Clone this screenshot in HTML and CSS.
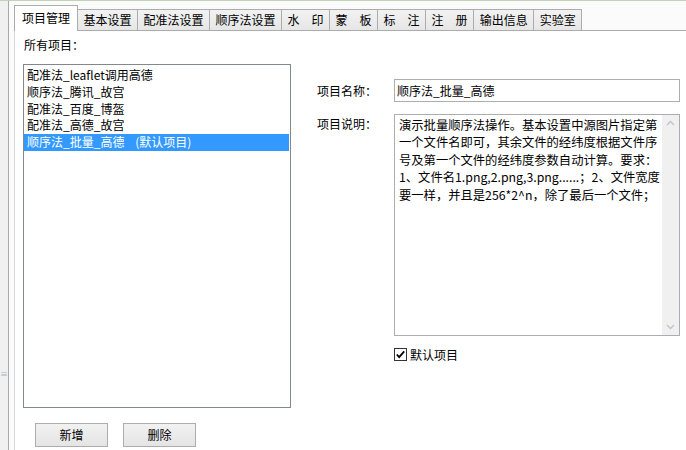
FILE: index.html
```html
<!DOCTYPE html>
<html lang="zh">
<head>
<meta charset="utf-8">
<link rel="stylesheet" href="styles.css">
</head>
<body>
<div class="topline"></div>
<div class="app">
  <div class="side"><span class="sidemark">≡</span></div>
  <div class="main">
    <div class="tabs">
      <div class="tab active">项目管理</div>
      <div class="tab after">基本设置</div>
      <div class="tab">配准法设置</div>
      <div class="tab">顺序法设置</div>
      <div class="tab">水　印</div>
      <div class="tab">蒙　板</div>
      <div class="tab">标　注</div>
      <div class="tab">注　册</div>
      <div class="tab">输出信息</div>
      <div class="tab last">实验室</div>
    </div>
    <div class="panel">
      <div class="leftcol">
        <div class="caption">所有项目：</div>
        <div class="listbox">
          <div class="item">配准法_leaflet调用高德</div>
          <div class="item">顺序法_腾讯_故宫</div>
          <div class="item">配准法_百度_博盔</div>
          <div class="item">配准法_高德_故宫</div>
          <div class="item sel">顺序法_批量_高德    (默认项目)</div>
        </div>
        <div class="buttons">
          <div class="btn">新增</div>
          <div class="btn">删除</div>
        </div>
      </div>
      <div class="rightcol">
        <div class="row">
          <div class="lbl">项目名称：</div>
          <div class="input">顺序法_批量_高德</div>
        </div>
        <div class="row desc">
          <div class="lbl">项目说明：</div>
          <div class="memo">
            <div class="memotext">演示批量顺序法操作。基本设置中源图片指定第<br>一个文件名即可，其余文件的经纬度根据文件序<br>号及第一个文件的经纬度参数自动计算。要求：<br>1、文件名1.png,2.png,3.png......；2、文件宽度<br>要一样，并且是256*2^n，除了最后一个文件；</div>
            <div class="vscroll">
              <svg class="arrow" width="17" height="17" viewBox="0 0 17 17"><path d="M5 10 L8.5 6.5 L12 10" fill="none" stroke="#c2c2c2" stroke-width="1.3"/></svg>
              <svg class="arrow" width="17" height="17" viewBox="0 0 17 17"><path d="M5 7 L8.5 10.5 L12 7" fill="none" stroke="#c2c2c2" stroke-width="1.3"/></svg>
            </div>
          </div>
        </div>
        <div class="check">
          <svg class="cbox" width="13" height="13" viewBox="0 0 13 13"><rect x="0.5" y="0.5" width="12" height="12" fill="#fff" stroke="#333"/><path d="M2.8 6.5 L5.2 9.2 L10.2 3.4" fill="none" stroke="#000" stroke-width="1.8"/></svg>
          <span class="clabel">默认项目</span>
        </div>
      </div>
    </div>
  </div>
</div>
</body>
</html>
```
FILE: styles.css
```css
html, body {
  margin: 0;
  padding: 0;
}
body {
  width: 686px;
  height: 450px;
  overflow: hidden;
  background: #ffffff;
  font-family: "Noto Sans CJK SC", "Noto Sans", sans-serif;
  font-size: 12px;
  color: #000;
}
.topline {
  height: 1px;
  background: #c4d2b6;
}
.app {
  display: flex;
  height: 449px;
}
.side {
  width: 8px;
  background: #f0f0f0;
  border-right: 1px solid #a8a8a8;
  display: flex;
  flex-direction: column;
  overflow: hidden;
}
.sidemark {
  margin-top: 368px;
  margin-left: 0;
  color: #9fb3c8;
  font-size: 8px;
  line-height: 10px;
}
.main {
  flex: 1;
  padding-top: 4px;
  padding-left: 5px;
  background: #fbfbfb;
  display: flex;
  flex-direction: column;
}
.tabs {
  display: flex;
  align-items: flex-end;
  height: 25px;
  border-bottom: 1px solid #acacac;
}
.tab {
  height: 20px;
  line-height: 20px;
  padding: 0 5.5px;
  border-top: 1px solid #acacac;
  border-left: 1px solid #acacac;
  background: linear-gradient(#f2f2f2, #e6e6e6);
  white-space: nowrap;
  color: #000;
}
.tab.last {
  border-right: 1px solid #acacac;
}
.tab.active {
  height: 25px;
  line-height: 24px;
  padding: 0 7px;
  margin-bottom: -1px;
  border-right: 1px solid #acacac;
  background: #ffffff;
  position: relative;
}
.tab.after {
  border-left: none;
}
.panel {
  flex: 1;
  display: flex;
  background: #ffffff;
  border-left: 1px solid #d9d9d9;
  padding-left: 8px;
}
.leftcol {
  width: 268px;
  display: flex;
  flex-direction: column;
}
.caption {
  margin-top: 7px;
  line-height: 14px;
  padding-left: 1px;
}
.listbox {
  margin-top: 12px;
  height: 344px;
  box-sizing: border-box;
  border: 1px solid #828790;
  padding-top: 2px;
  background: #fff;
}
.item {
  height: 16.75px;
  line-height: 16.75px;
  padding-left: 3px;
  margin-right: 1px;
  white-space: pre;
}
.item.sel {
  background: #3399ff;
  color: #ffffff;
}
.buttons {
  display: flex;
  gap: 15px;
  margin-top: 15px;
  margin-left: 12px;
}
.btn {
  width: 73px;
  height: 24px;
  box-sizing: border-box;
  border: 1px solid #adadad;
  background: linear-gradient(#f2f2f2, #e4e4e4);
  text-align: center;
  line-height: 22px;
}
.rightcol {
  margin-left: 26px;
  margin-top: 48px;
  display: flex;
  flex-direction: column;
}
.row {
  display: flex;
}
.lbl {
  width: 77px;
  line-height: 23px;
}
.desc {
  margin-top: 12px;
}
.desc .lbl {
  line-height: 14px;
  padding-top: 3px;
}
.input {
  width: 286px;
  height: 23px;
  box-sizing: border-box;
  border: 1px solid #abadb3;
  padding-left: 2px;
  line-height: 21px;
}
.memo {
  width: 286px;
  height: 222px;
  box-sizing: border-box;
  border: 1px solid #abadb3;
  display: flex;
}
.memotext {
  flex: 1;
  padding: 2px 0 0 4px;
  font-size: 12.3px;
  line-height: 17.4px;
  white-space: nowrap;
  overflow: hidden;
}
.vscroll {
  width: 17px;
  background: #f0f0f0;
  display: flex;
  flex-direction: column;
  justify-content: space-between;
}
.arrow {
  display: block;
}
.check {
  margin-top: 12px;
  margin-left: 77px;
  display: flex;
  align-items: center;
  height: 13px;
}
.cbox {
  display: block;
}
.clabel {
  margin-left: 3px;
  line-height: 13px;
}
```
